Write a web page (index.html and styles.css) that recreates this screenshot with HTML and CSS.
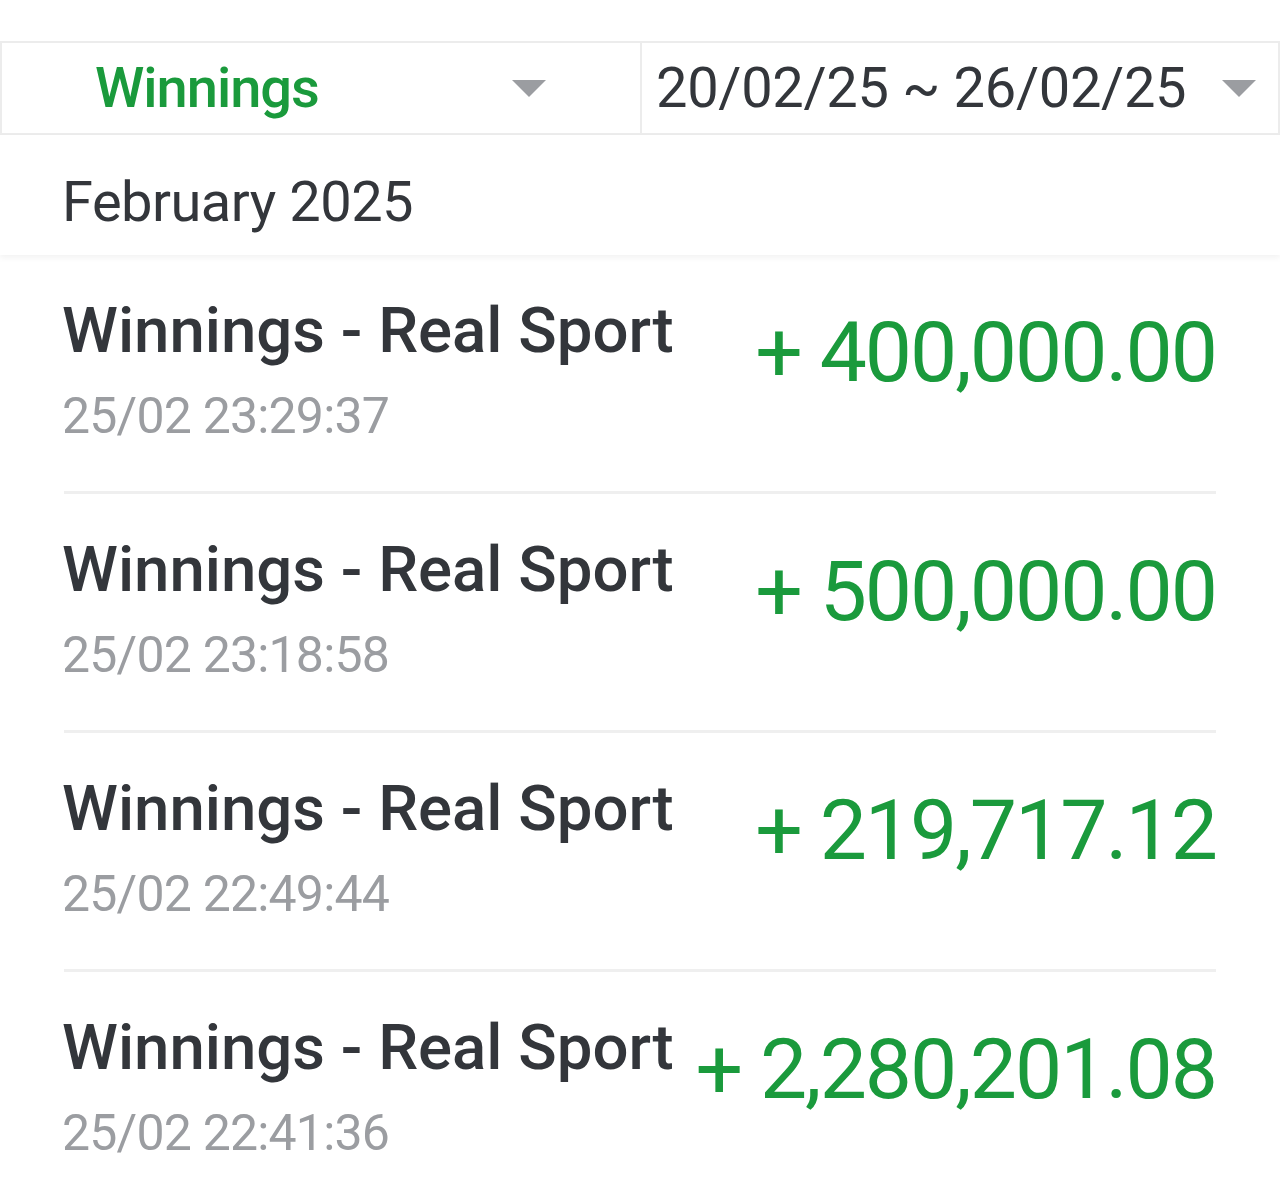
FILE: index.html
```html
<!DOCTYPE html>
<html lang="en">
<head>
    <meta charset="UTF-8">
    <meta name="viewport" content="width=device-width, initial-scale=1.0">
    <title>Transactions</title>
    <link rel="stylesheet" href="styles.css">
</head>
<body>

    <div class="filter-bar">
        <div class="filter-tab">
            <span class="filter-label active">Winnings</span>
            <span class="caret"></span>
        </div>
        <div class="filter-tab date-tab">
            <span class="filter-label">20/02/25 ~ 26/02/25</span>
            <span class="caret"></span>
        </div>
    </div>

    <div class="month-header">February 2025</div>

    <ul class="tx-list">
        <li class="tx-row">
            <div class="tx-info">
                <div class="tx-title">Winnings - Real Sport</div>
                <div class="tx-time">25/02 23:29:37</div>
            </div>
            <div class="tx-amount">+ 400,000.00</div>
        </li>
        <li class="tx-row">
            <div class="tx-info">
                <div class="tx-title">Winnings - Real Sport</div>
                <div class="tx-time">25/02 23:18:58</div>
            </div>
            <div class="tx-amount">+ 500,000.00</div>
        </li>
        <li class="tx-row">
            <div class="tx-info">
                <div class="tx-title">Winnings - Real Sport</div>
                <div class="tx-time">25/02 22:49:44</div>
            </div>
            <div class="tx-amount">+ 219,717.12</div>
        </li>
        <li class="tx-row">
            <div class="tx-info">
                <div class="tx-title">Winnings - Real Sport</div>
                <div class="tx-time">25/02 22:41:36</div>
            </div>
            <div class="tx-amount">+ 2,280,201.08</div>
        </li>
    </ul>

</body>
</html>
```

FILE: styles.css
```css
    body {
        font-family: Roboto, "Noto Sans", Arial, sans-serif;
        margin: 0;
        padding: 0;
        background-color: #ffffff;
        color: #33363b;
    }

    .filter-bar {
        display: grid;
        grid-template-columns: 1fr 1fr;
        margin-top: 41px;
        height: 90px;
        border: 2px solid #ececec;
    }

    .filter-tab {
        min-width: 0;
        display: flex;
        align-items: center;
        justify-content: space-between;
        padding: 0 94px 0 93px;
        white-space: nowrap;
    }

    .date-tab {
        border-left: 2px solid #ececec;
        padding: 0 22px 0 14px;
    }

    .filter-label {
        font-size: 56px;
        letter-spacing: -0.3px;
        color: #33363b;
    }

    .filter-label.active {
        color: #1a9a3c;
        font-weight: 500;
        letter-spacing: -1px;
    }

    .caret {
        width: 0;
        height: 0;
        border-left: 17px solid transparent;
        border-right: 17px solid transparent;
        border-top: 17px solid #9b9da1;
    }

    .month-header {
        height: 120px;
        padding-left: 62px;
        font-size: 56px;
        line-height: 134px;
        letter-spacing: -0.5px;
        box-shadow: 0 3px 6px rgba(0, 0, 0, 0.05);
        position: relative;
    }

    .tx-list {
        list-style: none;
        margin: 0;
        padding: 0 64px;
    }

    .tx-row {
        display: flex;
        justify-content: space-between;
        height: 236px;
        border-bottom: 3px solid #efefef;
    }

    .tx-row:last-child {
        border-bottom: none;
    }

    .tx-info {
        padding-top: 38px;
        margin-left: -2px;
    }

    .tx-title {
        font-size: 63.5px;
        font-weight: 500;
        line-height: 76px;
    }

    .tx-time {
        font-size: 50px;
        color: #9b9da1;
        letter-spacing: -0.8px;
        line-height: 95px;
    }

    .tx-amount {
        padding-top: 48px;
        font-size: 84px;
        color: #1a9a3c;
        letter-spacing: -2px;
        line-height: 100px;
    }
```
